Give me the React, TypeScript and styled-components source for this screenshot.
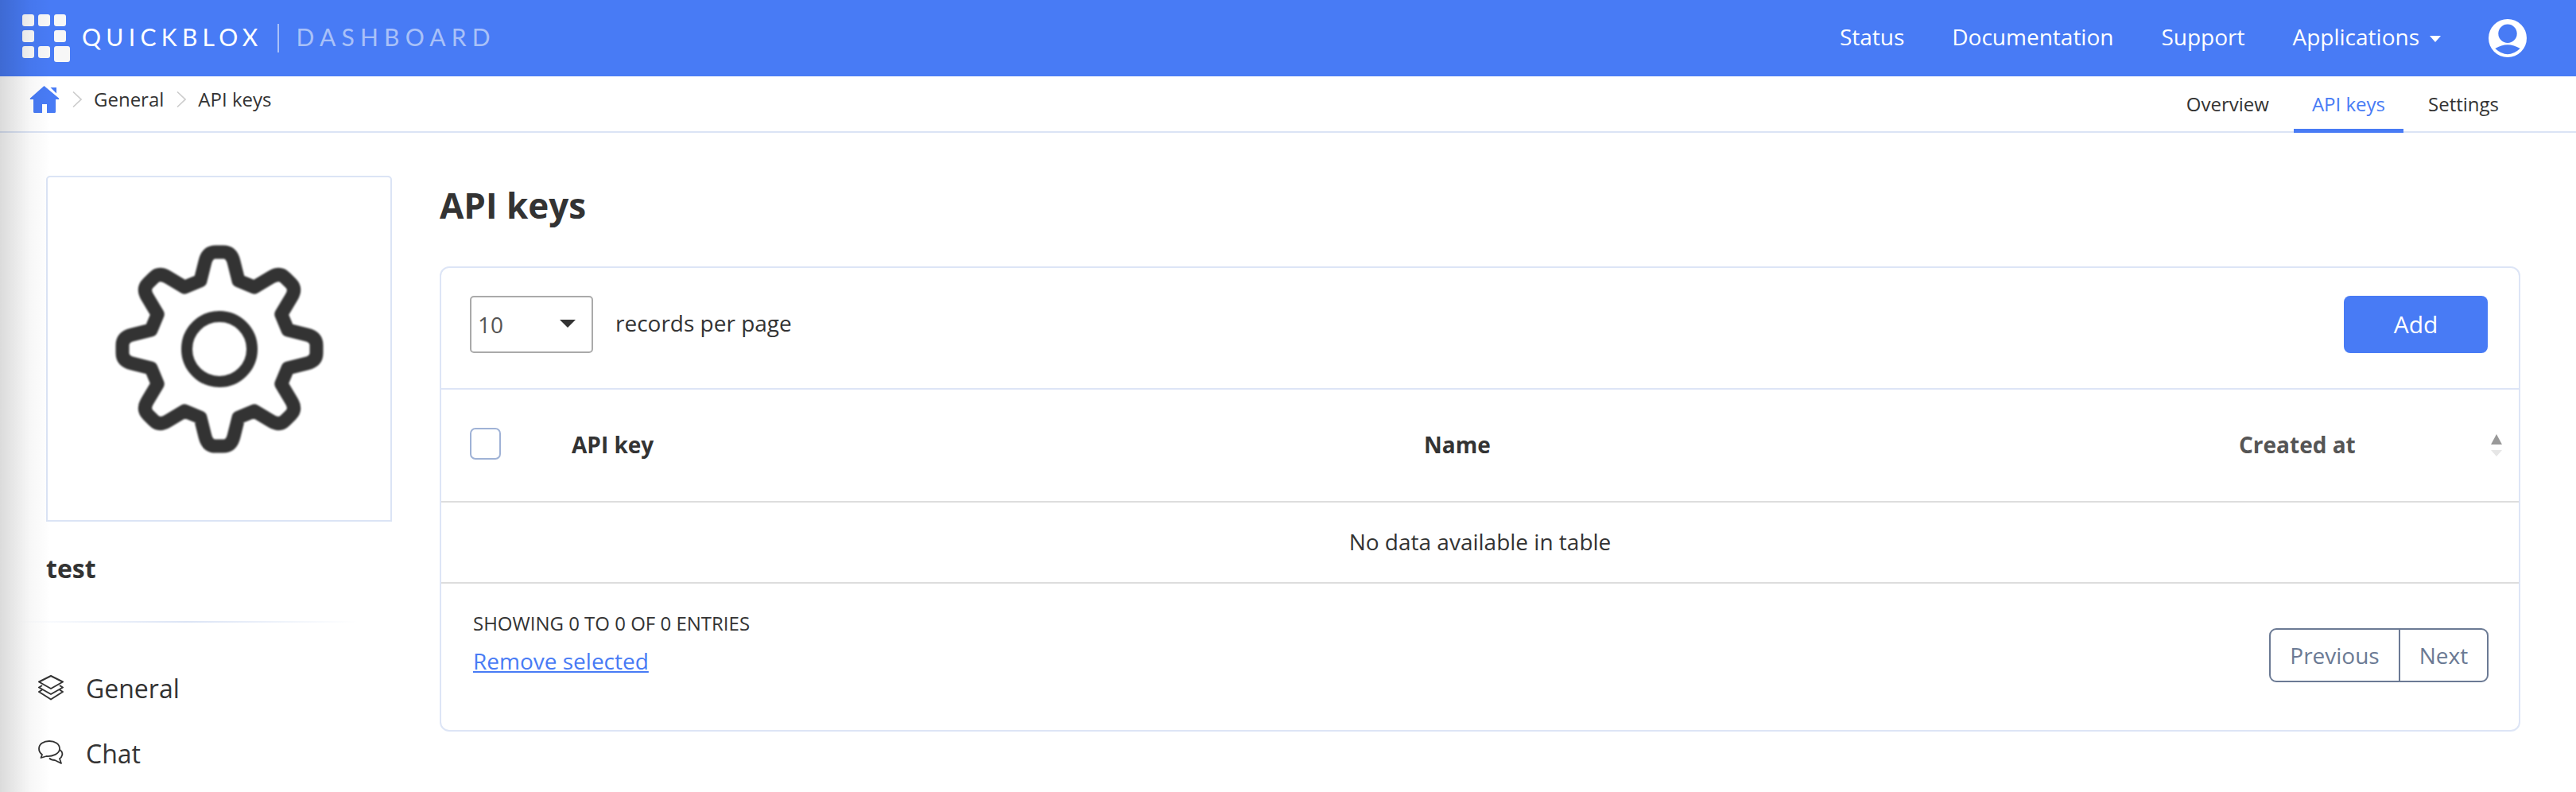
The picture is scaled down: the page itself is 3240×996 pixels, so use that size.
import React from "react";
import styled, { createGlobalStyle } from "styled-components";

const GlobalStyle = createGlobalStyle`
  html, body {
    margin: 0;
    padding: 0;
    background: #fff;
  }
  body {
    font-family: "Open Sans", "Liberation Sans", sans-serif;
    color: #333;
  }
  * {
    box-sizing: border-box;
  }
`;

const Page = styled.div`
  position: relative;
  width: 3240px;
  height: 996px;
  overflow: hidden;
`;

const EdgeShade = styled.div`
  position: absolute;
  top: 0;
  left: 0;
  bottom: 0;
  width: 64px;
  background: linear-gradient(to right, rgba(0, 0, 0, 0.14), rgba(0, 0, 0, 0.03) 60%, rgba(0, 0, 0, 0));
  pointer-events: none;
`;

const Header = styled.header`
  height: 96px;
  background: #487bf5;
  display: flex;
  align-items: center;
  justify-content: space-between;
  padding: 0 62px 0 28px;
  color: #fff;
`;

const Brand = styled.div`
  display: flex;
  align-items: center;
`;

const BrandName = styled.span<{ $dim?: boolean }>`
  font-family: Lato, "Open Sans", sans-serif;
  font-size: 30px;
  letter-spacing: ${p => (p.$dim ? "7.2px" : "6.3px")};
  line-height: 36px;
  padding-bottom: 4px;
  color: ${p => (p.$dim ? "#a9c1f8" : "#fff")};
  margin-left: ${p => (p.$dim ? "22px" : "15px")};
`;

const BrandRule = styled.span`
  width: 2px;
  height: 36px;
  margin-left: 18px;
  background: #a9c1f8;
`;

const TopNav = styled.nav`
  display: flex;
  align-items: center;
  gap: 60px;
`;

const TopLink = styled.a`
  font-size: 28px;
  padding-bottom: 5px;
  color: #fff;
  display: flex;
  align-items: center;
`;

const Caret = styled.span`
  width: 0;
  height: 0;
  margin-left: 13px;
  margin-top: 6px;
  border-left: 7.5px solid transparent;
  border-right: 7.5px solid transparent;
  border-top: 8px solid #fff;
`;

const SubBar = styled.div`
  height: 71px;
  border-bottom: 2px solid #dbe4f5;
  display: flex;
  justify-content: space-between;
`;

const Crumbs = styled.div`
  display: flex;
  align-items: center;
  padding: 0 0 12px 37px;
  font-size: 24px;
`;

const Crumb = styled.span`
  color: #333;
`;

const CrumbSep = styled.svg`
  width: 12px;
  height: 20px;
  margin: 0 15px 0 16px;
  flex: none;
`;

const Tabs = styled.div`
  display: flex;
  gap: 8px;
  padding-right: 74px;
  margin-bottom: -1px;
`;

const Tab = styled.a<{ $active?: boolean }>`
  padding: 0 23px;
  display: flex;
  align-items: center;
  height: 71px;
  padding-top: 2px;
  font-size: 24px;
  color: ${p => (p.$active ? "#487bf5" : "#333")};
  border-bottom: 5px solid ${p => (p.$active ? "#487bf5" : "transparent")};
`;

const Content = styled.div`
  display: flex;
`;

const Sidebar = styled.aside`
  width: 553px;
  flex: none;
  padding-top: 54px;
`;

const AvatarBox = styled.div`
  width: 435px;
  height: 435px;
  margin-left: 58px;
  border: 2px solid #dbe4f5;
  border-radius: 5px 5px 0 0;
  display: flex;
  align-items: center;
  justify-content: center;
`;

const GearIcon = styled.svg`
  width: 276px;
  height: 276px;
  filter: blur(0.8px);
`;

const AppName = styled.div`
  margin: 37px 0 0 58px;
  font-size: 32px;
  font-weight: 700;
  line-height: 44px;
`;

const SideRule = styled.div`
  width: 430px;
  height: 2px;
  margin: 44px 0 0 20px;
  background: linear-gradient(to right, rgba(219, 228, 245, 0), #dbe4f5 50%, rgba(219, 228, 245, 0));
`;

const SideMenu = styled.div`
  margin-top: 60px;
  display: flex;
  flex-direction: column;
  gap: 38px;
`;

const SideItem = styled.a`
  display: flex;
  align-items: center;
  height: 44px;
  padding-left: 48px;
  font-size: 32px;
  color: #333;
`;

const SideIcon = styled.svg`
  width: 32px;
  height: 32px;
  margin-right: 28px;
  flex: none;
`;

const Main = styled.main`
  width: 2617px;
  padding-top: 61px;
`;

const Title = styled.h1`
  margin: 0 0 47px;
  font-size: 44px;
  line-height: 60px;
  font-weight: 700;
`;

const Card = styled.section`
  border: 2px solid #dde5f6;
  border-radius: 12px;
  height: 585px;
`;

const Toolbar = styled.div`
  height: 153px;
  padding: 35px 39px 0 36px;
  border-bottom: 2px solid #dde5f6;
  display: flex;
  align-items: flex-start;
`;

const PageSize = styled.div`
  width: 155px;
  height: 72px;
  border: 2px solid #aaa;
  border-radius: 5px;
  padding: 0 20px 0 8px;
  display: flex;
  align-items: center;
  justify-content: space-between;
  font-size: 28px;
  color: #555;
`;

const SizeCaret = styled.span`
  width: 0;
  height: 0;
  margin-top: -3px;
  border-left: 10px solid transparent;
  border-right: 10px solid transparent;
  border-top: 10px solid #333;
`;

const PerPage = styled.span`
  margin-left: 28px;
  height: 72px;
  padding-bottom: 4px;
  display: flex;
  align-items: center;
  font-size: 28px;
`;

const AddButton = styled.button`
  margin-left: auto;
  width: 181px;
  height: 72px;
  padding-bottom: 2px;
  border: 0;
  border-radius: 8px;
  background: #487bf5;
  color: #fff;
  font-family: inherit;
  font-size: 30px;
`;

const HeadRow = styled.div`
  height: 142px;
  border-bottom: 2px solid #ddd;
  display: grid;
  grid-template-columns: 128px 1072px 1025px 1fr;
  align-items: center;
  position: relative;
  padding: 0 0 3px 36px;
  font-size: 28px;
  font-weight: 700;
`;

const HeadCheck = styled.div`
  grid-column: 1;
  width: 39px;
  height: 40px;
  margin-top: -1px;
  border: 2px solid #9fb2d6;
  border-radius: 7px;
`;

const HeadCell = styled.div<{ $muted?: boolean }>`
  color: ${p => (p.$muted ? "#555" : "#333")};
`;

const SortMarks = styled.div`
  position: absolute;
  top: 56px;
  right: 21px;
  display: flex;
  flex-direction: column;
  gap: 7px;
`;

const SortMark = styled.span<{ $down?: boolean }>`
  width: 0;
  height: 0;
  border-left: 7px solid transparent;
  border-right: 7px solid transparent;
  border-bottom: ${p => (p.$down ? "0" : "13px solid #999")};
  border-top: ${p => (p.$down ? "8px solid #e6e6e6" : "0")};
`;

const EmptyRow = styled.div`
  height: 102px;
  padding-bottom: 3px;
  border-bottom: 2px solid #ddd;
  display: flex;
  align-items: center;
  justify-content: center;
  font-size: 28px;
`;

const Footer = styled.div`
  display: flex;
  justify-content: space-between;
  padding: 34px 38px 0 40px;
`;

const Entries = styled.div`
  font-size: 24px;
  line-height: 32px;
`;

const RemoveLink = styled.a`
  display: block;
  margin-top: 12px;
  font-size: 28px;
  line-height: 38px;
  color: #487bf5;
  text-decoration: underline;
`;

const Pager = styled.div`
  display: flex;
  height: 68px;
  margin-top: 22px;
  border: 2px solid #6b7a94;
  border-radius: 9px;
  color: #6b7a94;
  font-size: 28px;
`;

const PagerButton = styled.a<{ $first?: boolean }>`
  width: ${p => (p.$first ? "163px" : "109px")};
  display: flex;
  align-items: center;
  justify-content: center;
  border-right: ${p => (p.$first ? "2px solid #6b7a94" : "0")};
`;

const UserIcon = styled.svg`
  width: 48px;
  height: 48px;
`;

const buildGear = () => {
  const tooth: [number, number][] = [
    [-24, -86],
    [-18, -110],
    [-15, -122],
    [-5, -122],
    [5, -122],
    [15, -122],
    [18, -110],
    [24, -86],
  ];
  let d = "";
  for (let k = 0; k < 8; k++) {
    const a = (k * Math.PI) / 4;
    const p = tooth.map(([x, y]) => {
      const rx = x * Math.cos(a) - y * Math.sin(a);
      const ry = x * Math.sin(a) + y * Math.cos(a);
      return `${rx.toFixed(1)} ${ry.toFixed(1)}`;
    });
    d += `${k === 0 ? "M" : "L"}${p[0]} L${p[1]} Q${p[2]} ${p[3]} L${p[4]} Q${p[5]} ${p[6]} L${p[7]} `;
  }
  return d + "Z";
};

const Chevron = () => (
  <CrumbSep viewBox="0 0 12 20">
    <path d="M1 0.5 L11 10 L1 19.5" fill="none" stroke="#ccc" strokeWidth="1.6" />
  </CrumbSep>
);

const App: React.FC = () => {
  return (
    <Page>
      <GlobalStyle />
      <Header>
        <Brand>
          <svg width="60" height="60" viewBox="0 0 60 60">
            <g fill="#f7f7f7">
              <rect x="0" y="0" width="15" height="15" rx="3" />
              <rect x="20" y="0" width="15" height="15" rx="3" />
              <rect x="40" y="0" width="15" height="15" rx="3" />
              <rect x="0" y="20" width="15" height="15" rx="3" />
              <rect x="40" y="20" width="15" height="15" rx="3" />
              <rect x="0" y="40" width="15" height="15" rx="3" />
              <rect x="20" y="40" width="15" height="15" rx="3" />
              <rect x="40" y="40" width="20" height="20" rx="3" />
            </g>
          </svg>
          <BrandName>QUICKBLOX</BrandName>
          <BrandRule />
          <BrandName $dim>DASHBOARD</BrandName>
        </Brand>
        <TopNav>
          <TopLink>Status</TopLink>
          <TopLink>Documentation</TopLink>
          <TopLink>Support</TopLink>
          <TopLink>
            Applications
            <Caret />
          </TopLink>
          <UserIcon viewBox="0 0 48 48">
            <circle cx="24" cy="24" r="24" fill="#fff" />
            <circle cx="24" cy="18.3" r="11.7" fill="#487bf5" />
            <path d="M8.3 37 Q24 27.6 39.7 37 Q24 51.6 8.3 37 Z" fill="#487bf5" />
          </UserIcon>
        </TopNav>
      </Header>
      <SubBar>
        <Crumbs>
          <svg width="38" height="34" viewBox="0 0 38 34">
            <path
              d="M18.5 0 L37 15.5 Q38 17 36 17 L33 17 L33 32.5 Q33 34 31.5 34 L22 34 L22 23 L16 23 L16 34 L6.5 34 Q5 34 5 32.5 L5 17 L2 17 Q0 17 1 15.5 Z"
              fill="#487bf5"
            />
            <path d="M26.5 2 L34 2 L34 9.5 Z" fill="#487bf5" />
          </svg>
          <Chevron />
          <Crumb>General</Crumb>
          <Chevron />
          <Crumb>API keys</Crumb>
        </Crumbs>
        <Tabs>
          <Tab>Overview</Tab>
          <Tab $active>API keys</Tab>
          <Tab>Settings</Tab>
        </Tabs>
      </SubBar>
      <Content>
        <Sidebar>
          <AvatarBox>
            <GearIcon viewBox="-138 -138 276 276">
              <path d={buildGear()} fill="none" stroke="#333" strokeWidth="17" strokeLinejoin="round" />
              <circle cx="0" cy="0" r="41" fill="none" stroke="#333" strokeWidth="14" />
            </GearIcon>
          </AvatarBox>
          <AppName>test</AppName>
          <SideRule />
          <SideMenu>
            <SideItem>
              <SideIcon viewBox="0 0 32 32">
                <g fill="none" stroke="#333" strokeWidth="2" strokeLinejoin="round">
                  <path d="M16 1 L31 8.5 L16 17 L1 8.5 Z" />
                  <path d="M5 13 L1 15.5 L16 24 L31 15.5 L27 13" />
                  <path d="M5 18.5 L1 21 L16 30.5 L31 21 L27 18.5" />
                </g>
              </SideIcon>
              General
            </SideItem>
            <SideItem>
              <SideIcon viewBox="0 0 32 32">
                <g fill="none" stroke="#333" strokeWidth="1.8" strokeLinejoin="round">
                  <path d="M14 1 C7 1 1 4.5 1 10.5 C1 14 3 16.5 5 18 L3.5 22 L10.5 20 C18 20.5 27 17 27 10.5 C27 4.5 21 1 14 1 Z" />
                  <path d="M27.5 12 C30 14 31 16.5 30 19 C29.5 21 28 22.5 27 23 L29 29 L21 25 C18 25 15.5 24 14 22.5" />
                </g>
              </SideIcon>
              Chat
            </SideItem>
          </SideMenu>
        </Sidebar>
        <Main>
          <Title>API keys</Title>
          <Card>
            <Toolbar>
              <PageSize>
                10
                <SizeCaret />
              </PageSize>
              <PerPage>records per page</PerPage>
              <AddButton>Add</AddButton>
            </Toolbar>
            <HeadRow>
              <HeadCheck />
              <HeadCell>API key</HeadCell>
              <HeadCell>Name</HeadCell>
              <HeadCell $muted>Created at</HeadCell>
              <SortMarks>
                <SortMark />
                <SortMark $down />
              </SortMarks>
            </HeadRow>
            <EmptyRow>No data available in table</EmptyRow>
            <Footer>
              <div>
                <Entries>SHOWING 0 TO 0 OF 0 ENTRIES</Entries>
                <RemoveLink>Remove selected</RemoveLink>
              </div>
              <Pager>
                <PagerButton $first>Previous</PagerButton>
                <PagerButton>Next</PagerButton>
              </Pager>
            </Footer>
          </Card>
        </Main>
      </Content>
      <EdgeShade />
    </Page>
  );
};

export default App;
